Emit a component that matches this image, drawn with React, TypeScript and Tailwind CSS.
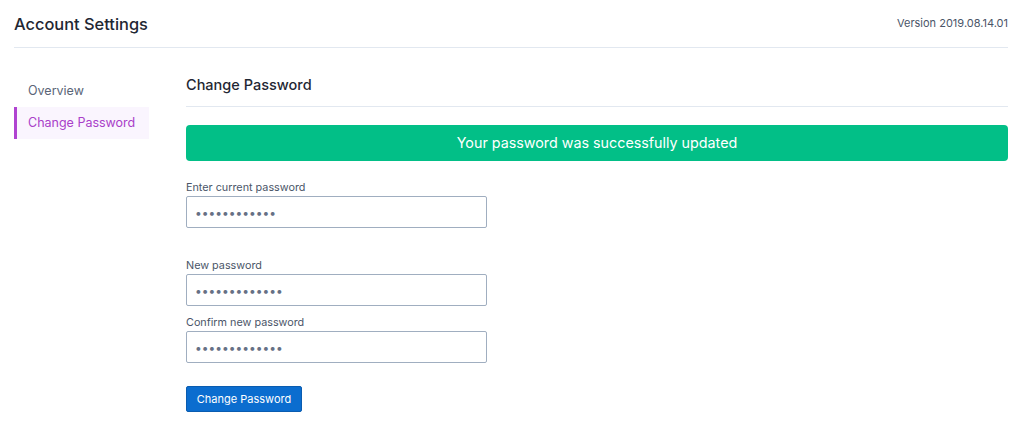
import React from "react";

function Field({ label, value, className = "" }: { label: string; value: string; className?: string }) {
  return (
    <div className={"flex flex-col " + className}>
      <label className="text-[10.8px] leading-[14px] text-[#4a5568] mb-[1px]">{label}</label>
      <input
        type="password"
        readOnly
        defaultValue={value}
        className="w-[301px] h-[32px] border border-[#a0aec0] rounded-[2px] px-[8px] text-[12px] text-[#667085] outline-none bg-white"
      />
    </div>
  );
}

export default function App() {
  return (
    <div className="w-[1024px] h-[443px] bg-white pl-[14px] pr-[16px] font-['Inter','Liberation_Sans',sans-serif] text-[#1a202c]">
      <div className="h-[48px] flex items-center justify-between border-b border-[#e2e8f0]">
        <div className="text-[16.4px] leading-[20px] font-medium text-[#1f2733]">Account Settings</div>
        <div className="text-[11px] leading-[14px] text-[#4a5568] -mt-[1px]">Version 2019.08.14.01</div>
      </div>
      <div className="flex mt-[27px]">
        <div className="w-[135px] flex flex-col">
          <div className="h-[32px] flex items-center pl-[14px] text-[12.5px] text-[#5a6577]">Overview</div>
          <div className="h-[32px] flex items-center pl-[11px] border-l-[3px] border-[#b043d1] bg-[#faf5fe] text-[12.5px] text-[#a940c9]">
            Change Password
          </div>
        </div>
        <div className="flex-1 ml-[37px] flex flex-col">
          <div className="h-[32px] flex items-start border-b border-[#e2e8f0]">
            <div className="text-[14.5px] leading-[20px] font-medium text-[#1f2733]">Change Password</div>
          </div>
          <div className="mt-[18px] h-[36px] rounded-[4px] bg-[#02bf87] flex items-center justify-center text-[14.3px] text-white">
            Your password was successfully updated
          </div>
          <Field label="Enter current password" value="currentpassw" className="mt-[20px]" />
          <Field label="New password" value="newpassword12" className="mt-[31px]" />
          <Field label="Confirm new password" value="newpassword12" className="mt-[10px]" />
          <div className="mt-[22px]">
            <button className="w-[116px] h-[26px] rounded-[2px] bg-[#0b6dcf] border border-[#0a5cb0] text-white text-[11px]">
              Change Password
            </button>
          </div>
        </div>
      </div>
    </div>
  );
}
